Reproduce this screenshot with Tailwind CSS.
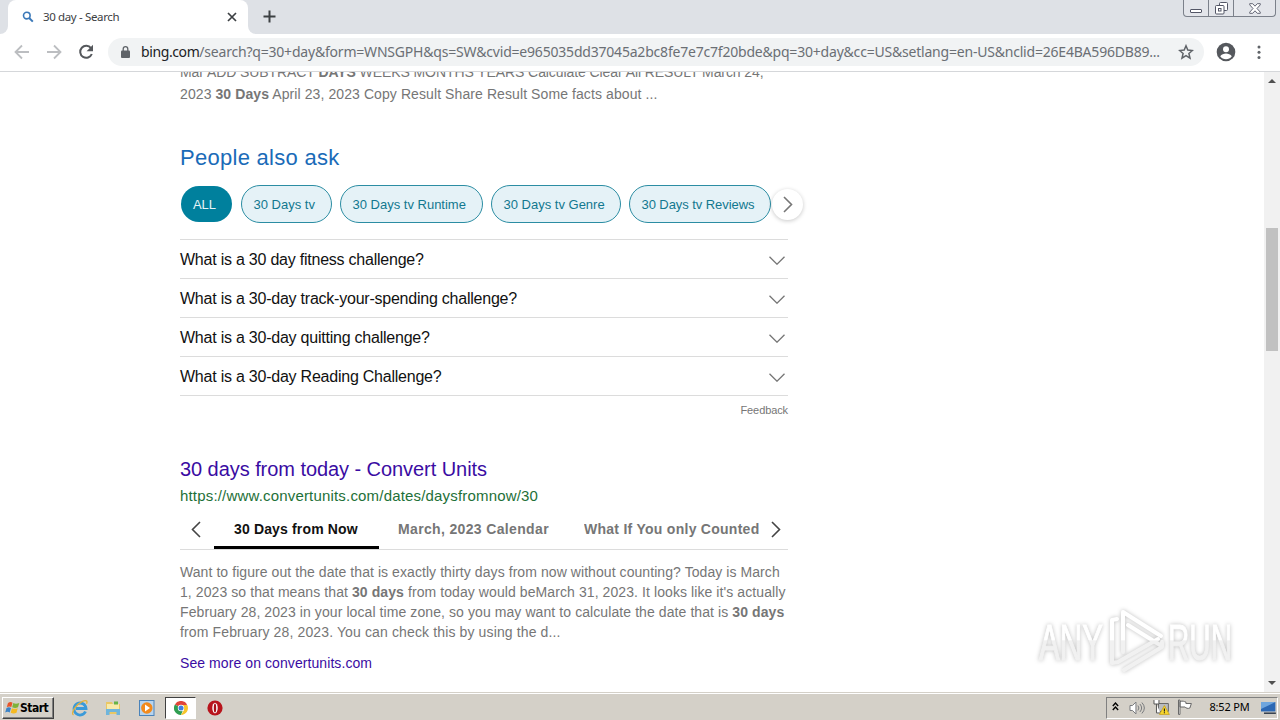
<!doctype html>
<html lang="en">
    <head>
        <meta charset="UTF-8" />
        <meta name="viewport" content="width=device-width, initial-scale=1.0" />
        <title>30 day - Search</title>
        <script src="https://cdn.jsdelivr.net/npm/@tailwindcss/browser@4"></script>
    </head>
    <body
        class="relative flex h-[720px] w-[1280px] flex-col overflow-hidden bg-white font-['Liberation_Sans',sans-serif] whitespace-nowrap"
    >
        <!-- Tab strip -->
        <header class="flex h-[34px] shrink-0 items-start bg-[#dee1e6]">
            <div class="flex h-[34px] w-2 items-end bg-white">
                <div class="h-[34px] w-2 rounded-br-lg bg-[#dee1e6]"></div>
            </div>
            <div
                class="flex h-[34px] w-60 items-center rounded-t-lg bg-white pr-2.5 pl-3.5 font-['Noto_Sans',sans-serif] text-[11.5px] text-[#3c4043]"
            >
                <svg class="mr-[9px] size-3" viewBox="0 0 12 12" fill="none" stroke="#3a78b8">
                    <circle cx="4.8" cy="4.6" r="3.3" stroke-width="1.6" />
                    <path d="M7.2 7 10.8 10.6" stroke-width="2" />
                </svg>
                <span class="tracking-[-0.36px]">30 day - Search</span>
                <svg class="ml-auto size-3" viewBox="0 0 12 12" stroke="#3c4043" stroke-width="1.7">
                    <path d="M2 2 10 10M10 2 2 10" />
                </svg>
            </div>
            <div class="h-[34px] w-2 bg-white">
                <div class="h-[34px] w-2 rounded-bl-lg bg-[#dee1e6]"></div>
            </div>
            <svg class="mt-2.5 ml-[7px] size-[13px]" viewBox="0 0 13 13" stroke="#3c4043" stroke-width="2">
                <path d="M6.5 .5v12M.5 6.5h12" />
            </svg>
            <!-- Window buttons -->
            <div class="mr-1 ml-auto flex h-[17px] w-[93px] rounded-b border border-t-0 border-[#7b808a] bg-[#e3e5ea]">
                <div class="flex w-[25px] items-end justify-center border-r border-[#7b808a] pb-[3px]">
                    <div class="h-1 w-3 rounded-[1px] border border-[#535666] bg-white"></div>
                </div>
                <div class="flex w-[25px] justify-center border-r border-[#7b808a] pt-0.5">
                    <svg class="size-[13px]" viewBox="0 0 13 13" fill="#fff" stroke="#535666">
                        <rect x="4.5" y=".5" width="8" height="8" rx="1" />
                        <rect x=".5" y="3.5" width="8.5" height="8.5" rx="1" />
                        <rect x="3.5" y="6.5" width="2.5" height="2.5" />
                    </svg>
                </div>
                <div class="flex flex-1 justify-center pt-[3px]">
                    <svg class="h-[11px] w-3" viewBox="0 0 12 11" fill="#fff" stroke="#535666" stroke-width=".9">
                        <path d="M.7.7h3L6 3.2 8.3.7h3v1.1L8 5.5l3.3 3.7v1.1h-3L6 7.8l-2.3 2.5h-3V9.2L4 5.5.7 1.8z" />
                    </svg>
                </div>
            </div>
        </header>

        <!-- Toolbar -->
        <div class="flex h-[38px] shrink-0 items-center border-b border-[#d5d7da] bg-white pb-px">
            <svg class="ml-3.5 size-4" viewBox="0 0 16 16" fill="none" stroke="#bcbec1" stroke-width="1.8">
                <path d="M15 8H2M8 1.5 1.5 8 8 14.5" />
            </svg>
            <svg class="ml-4 size-4" viewBox="0 0 16 16" fill="none" stroke="#bcbec1" stroke-width="1.8">
                <path d="M1 8h13M8 1.5 14.5 8 8 14.5" />
            </svg>
            <svg class="ml-4 size-4" viewBox="0 0 16 16" fill="none">
                <path d="M13 4.2A6 6 0 1 0 13.8 10" stroke="#55585c" stroke-width="2" />
                <path d="M15 .8v6.4H8.6z" fill="#55585c" />
            </svg>
            <div
                class="ml-[14px] flex h-7 w-[1096px] items-center rounded-full bg-[#f1f3f4] pr-2.5 pl-[13px] font-['Noto_Sans',sans-serif] text-[14px] text-[#6b6f74]"
            >
                <svg class="mr-[11px] h-3 w-[9px]" viewBox="0 0 9 12">
                    <path d="M2.2 5V3a2.3 2.3 0 0 1 4.6 0v2" fill="none" stroke="#5f6368" stroke-width="1.3" />
                    <rect y="4.5" width="9" height="7.5" rx="1" fill="#5f6368" />
                </svg>
                <span class="-mt-px w-[1020px] tracking-[-0.205px]"
                    ><span class="tracking-[-0.4px] text-[#202124]">bing.com</span>/search?q=30+day&amp;form=WNSGPH&amp;qs=SW&amp;cvid=e965035dd37045a2bc8fe7e7c7f20bde&amp;pq=30+day&amp;cc=US&amp;setlang=en-US&amp;nclid=26E4BA596DB89...</span
                >
                <svg class="ml-auto size-4" viewBox="0 0 16 16" fill="none" stroke="#5f6368" stroke-width="1.5">
                    <path d="m8 1.8 1.8 4.3 4.6.4-3.5 3 1.1 4.6L8 11.7l-4 2.4 1.1-4.6-3.5-3 4.6-.4z" />
                </svg>
            </div>
            <svg class="ml-3 size-5" viewBox="0 0 20 20">
                <circle cx="10" cy="10" r="9.3" fill="#55585d" />
                <circle cx="10" cy="7.3" r="3" fill="#fff" />
                <path d="M4.2 14.2c1.2-2 3.6-2.8 5.8-2.8s4.6.8 5.8 2.8a7 7 0 0 1-11.6 0z" fill="#fff" />
            </svg>
            <svg class="ml-[21px] h-4 w-1" viewBox="0 0 4 16" fill="#5f6368">
                <circle cx="2" cy="3" r="1.5" />
                <circle cx="2" cy="8.3" r="1.5" />
                <circle cx="2" cy="13.6" r="1.5" />
            </svg>
        </div>

        <!-- Page -->
        <div class="flex h-[620px] shrink-0 overflow-hidden">
            <main class="w-[1264px] pl-[180px] text-[#767676]">
                <div class="-mt-[11px] text-[14px] leading-[22px]">
                    <p class="tracking-[-0.08px]">
                        Mar ADD SUBTRACT <b>DAYS</b> WEEKS MONTHS YEARS Calculate Clear All RESULT March 24,
                    </p>
                    <p class="tracking-[0.09px]">
                        2023 <b>30 Days</b> April 23, 2023 Copy Result Share Result Some facts about ...
                    </p>
                </div>

                <h2 class="mt-[39px] text-[22px] leading-7 tracking-[0.28px] text-[#1a6bb8]">People also ask</h2>
                <div class="mt-[13px] flex h-[38px] items-center gap-2 text-[13px] text-[#12788f]">
                    <div class="ml-px flex h-9 w-[51px] items-center justify-center rounded-full bg-[#00809d] pt-0.5 pr-1 text-[#e5f4f7]">ALL</div>
                    <div class="ml-px flex h-[38px] w-[91px] items-center rounded-full border border-[#2b8da3] bg-[#e5f2f7] pt-0.5 pl-[11.5px]">30 Days tv</div>
                    <div class="flex h-[38px] w-[143px] items-center rounded-full border border-[#2b8da3] bg-[#e5f2f7] pt-0.5 pl-[11.5px]">30 Days tv Runtime</div>
                    <div class="flex h-[38px] w-[130px] items-center rounded-full border border-[#2b8da3] bg-[#e5f2f7] pt-0.5 pl-[11.5px]">30 Days tv Genre</div>
                    <div class="flex h-[38px] w-[142px] items-center rounded-full border border-[#2b8da3] bg-[#e5f2f7] pt-0.5 pl-[11.5px] tracking-[-0.07px]">30 Days tv Reviews</div>
                    <div class="-ml-[7px] flex size-[31px] items-center justify-center rounded-full bg-white pl-px shadow-[0_1px_4px_rgba(0,0,0,0.22)]">
                        <svg class="h-[17px] w-[10px]" viewBox="0 0 10 17" fill="none" stroke="#767676" stroke-width="1.6">
                            <path d="m1 1 7.5 7.5L1 16" />
                        </svg>
                    </div>
                </div>

                <div class="mt-4 w-[608px] border-t border-[#dcdcdc] text-[16px] tracking-[-0.23px] text-[#111]">
                    <div class="flex h-[39px] items-center justify-between border-b border-[#dcdcdc] pt-0.5 pr-[3px]">
                        <span>What is a 30 day fitness challenge?</span>
                        <svg class="h-[9px] w-4" viewBox="0 0 16 9" fill="none" stroke="#767676" stroke-width="1.3"><path d="m.5.7 7.5 7.5L15.5.7" /></svg>
                    </div>
                    <div class="flex h-[39px] items-center justify-between border-b border-[#dcdcdc] pt-0.5 pr-[3px]">
                        <span>What is a 30-day track-your-spending challenge?</span>
                        <svg class="h-[9px] w-4" viewBox="0 0 16 9" fill="none" stroke="#767676" stroke-width="1.3"><path d="m.5.7 7.5 7.5L15.5.7" /></svg>
                    </div>
                    <div class="flex h-[39px] items-center justify-between border-b border-[#dcdcdc] pt-0.5 pr-[3px]">
                        <span>What is a 30-day quitting challenge?</span>
                        <svg class="h-[9px] w-4" viewBox="0 0 16 9" fill="none" stroke="#767676" stroke-width="1.3"><path d="m.5.7 7.5 7.5L15.5.7" /></svg>
                    </div>
                    <div class="flex h-[39px] items-center justify-between border-b border-[#dcdcdc] pt-0.5 pr-[3px]">
                        <span>What is a 30-day Reading Challenge?</span>
                        <svg class="h-[9px] w-4" viewBox="0 0 16 9" fill="none" stroke="#767676" stroke-width="1.3"><path d="m.5.7 7.5 7.5L15.5.7" /></svg>
                    </div>
                </div>
                <div class="mt-1.5 w-[608px] text-right text-[11px] leading-4 tracking-[-0.1px]">Feedback</div>

                <h2 class="mt-[38px] text-[20px] leading-[26px] tracking-[-0.06px] text-[#3a0ca3]">30 days from today - Convert Units</h2>
                <div class="mt-1 text-[15px] leading-5 tracking-[0.18px] text-[#1e7038]">https://www.convertunits.com/dates/daysfromnow/30</div>

                <div class="mt-[3px] flex h-[41px] w-[608px] items-center border-b border-[#dcdcdc] text-[14px] font-bold">
                    <svg class="ml-[11px] h-[17px] w-[10px]" viewBox="0 0 10 17" fill="none" stroke="#444" stroke-width="1.6">
                        <path d="M9 1 1.5 8.5 9 16" />
                    </svg>
                    <div class="ml-[13px] flex h-10 w-[165px] items-center border-b-[3px] border-black pt-[3px] pl-5 tracking-[0.15px] text-[#111]">30 Days from Now</div>
                    <div class="ml-[19px] w-[186px] tracking-[0.35px]">March, 2023 Calendar</div>
                    <div class="w-[176px] overflow-hidden tracking-[0.27px]">What If You only Counted</div>
                    <svg class="ml-[11px] h-[17px] w-[10px]" viewBox="0 0 10 17" fill="none" stroke="#444" stroke-width="1.6">
                        <path d="m1 1 7.5 7.5L1 16" />
                    </svg>
                </div>

                <div class="mt-3 text-[14px] leading-5 tracking-[0.085px]">
                    <p class="tracking-[0.07px]">Want to figure out the date that is exactly thirty days from now without counting? Today is March</p>
                    <p>1, 2023 so that means that <b>30 days</b> from today would beMarch 31, 2023. It looks like it's actually</p>
                    <p>February 28, 2023 in your local time zone, so you may want to calculate the date that is <b>30 days</b></p>
                    <p class="tracking-[0.13px]">from February 28, 2023. You can check this by using the d...</p>
                </div>
                <div class="mt-[11px] text-[14px] leading-5 tracking-[0.08px] text-[#3a0ca3]">See more on convertunits.com</div>
            </main>

            <!-- Scrollbar -->
            <div class="flex h-full w-4 flex-col items-center bg-[#f1f1f1]">
                <svg class="mt-[7px] h-1 w-2" viewBox="0 0 8 4" fill="#505050"><path d="M0 4 4 0l4 4z" /></svg>
                <div class="mt-[145px] h-[123px] w-3 bg-[#c1c1c1]"></div>
                <svg class="mt-auto mb-[7px] h-1 w-2" viewBox="0 0 8 4" fill="#505050"><path d="M0 0h8L4 4z" /></svg>
            </div>
        </div>

        <!-- Taskbar -->
        <footer class="flex h-7 shrink-0 items-center border-t border-[#d4d0c8] bg-[#d4d0c8] pt-0.5 shadow-[inset_0_1px_0_#fff]">
            <div
                class="ml-0.5 flex h-[22px] w-[52px] items-center border border-t-white border-r-[#404040] border-b-[#404040] border-l-white pl-px font-['DejaVu_Sans_Condensed','DejaVu_Sans',sans-serif] text-[12px] font-bold text-black shadow-[inset_-1px_-1px_0_#808080]"
            >
                <svg class="h-4 w-[17px] shrink-0" viewBox="0 0 17 16">
                    <path d="M4 3c2-1.5 3.5-1 4.5-.3L7.3 7C6 6.2 4.5 6.2 2.8 7z" fill="#e8552a" />
                    <path d="M9.3 3c1.5.9 3.5 1 6 0L14 7.3c-2 1-4 .8-5.8 0z" fill="#7fb239" />
                    <path d="M2.5 8c1.7-.9 3.2-.8 4.5 0l-1.3 4.5c-1.3-.9-2.8-.9-4.5 0z" fill="#3b83c8" />
                    <path d="M7.9 8.2c1.8.8 3.7.9 5.8 0L12.5 12.7c-2 1-4 .8-5.8 0z" fill="#f5b921" />
                </svg>
                <span class="-ml-px tracking-[-0.5px]">Start</span>
            </div>
            <!-- Internet Explorer -->
            <svg class="ml-[17px] size-[18px]" viewBox="0 0 18 18" fill="none">
                <path d="M14.5 12.5A6 6 0 1 1 15 9.5H5" stroke="#3a9ad9" stroke-width="2.8" />
                <path d="M2.5 16C-.5 14 5 5.5 11 2.7c4-2 6-1 4.5 2" stroke="#e3b23c" stroke-width="1.3" />
            </svg>
            <!-- Explorer -->
            <svg class="ml-[15px] size-[18px]" viewBox="0 0 18 18">
                <path d="M2 3h6l1 2h7v10H2z" fill="#e9c765" />
                <path d="M3 5h12v5H3z" fill="#f8eaaa" />
                <path d="M10 2.5h4v3h-4z" fill="#67b346" />
                <path d="M2 10h14v6h-3.5v-3h-7v3H2z" fill="#6fb5dc" />
            </svg>
            <!-- Media player -->
            <svg class="ml-4 size-[18px]" viewBox="0 0 18 18">
                <rect x="1.5" y="1.5" width="14.5" height="15" fill="#b7d4ee" stroke="#4a83ba" />
                <circle cx="8.8" cy="9" r="5.7" fill="#f28a1c" />
                <path d="m7 5.5 5 3.5-5 3.5z" fill="#fff" />
            </svg>
            <!-- Chrome -->
            <div
                class="ml-[9px] flex h-[22px] w-[31px] items-center justify-center border border-t-[#404040] border-r-white border-b-white border-l-[#404040] bg-white"
            >
                <svg class="size-[14px]" viewBox="0 0 14 14">
                    <path d="M7 7 .9 3.5a7 7 0 0 1 12.2 0z" fill="#e0453a" />
                    <path d="M7 7 .9 3.5A7 7 0 0 0 7 14l2-5z" fill="#2f9e51" />
                    <path d="M7 4h6.3A7 7 0 0 1 7 14l3-5z" fill="#f7c52b" />
                    <circle cx="7" cy="7" r="3.2" fill="#fff" />
                    <circle cx="7" cy="7" r="2.5" fill="#3f7fe0" />
                </svg>
            </div>
            <!-- Opera -->
            <svg class="ml-[11px] size-4" viewBox="0 0 16 16">
                <circle cx="8" cy="8" r="7.6" fill="#b8141c" />
                <ellipse cx="8" cy="8" rx="2.7" ry="5.3" fill="#fff" />
                <ellipse cx="8" cy="8" rx="1.2" ry="4.5" fill="#a80f18" />
            </svg>

            <!-- Tray -->
            <div
                class="mr-0.5 ml-auto flex h-[22px] w-[172px] items-center border border-t-[#808080] border-r-white border-b-white border-l-[#808080] font-['Noto_Sans',sans-serif] text-[11px] text-black"
            >
                <svg class="-mt-[3px] ml-[5px] h-[9px] w-[7px]" viewBox="0 0 7 9" fill="none" stroke="#000" stroke-width="1.4">
                    <path d="m.8 4 2.7-3 2.7 3M.8 8l2.7-3 2.7 3" />
                </svg>
                <svg class="ml-[10px] h-4 w-[17px]" viewBox="0 0 17 16" fill="none" stroke="#77797c">
                    <path d="M1 5.5h2.5L7 2v12l-3.5-3.5H1z" fill="#fff" />
                    <path d="M9 5.5q2 2.500 0 5M11 4q3.500 4 0 8M13 2.500q5 5.500 0 11" />
                </svg>
                <svg class="-mt-px ml-[7px] h-4 w-[17px]" viewBox="0 0 17 16">
                    <path d="M5.5 4.5h10v8h-10z" fill="#b9bcc0" stroke="#666" />
                    <path d="M1 1v4h5V1M3.5 5v9h4" fill="#fff" stroke="#555" />
                    <path d="m11.5 6.5 5 9h-10z" fill="#f8d62c" stroke="#c19a13" stroke-width=".7" />
                    <path d="M11.5 9.5v3M11.5 13.3v1" stroke="#222" stroke-width="1.2" />
                </svg>
                <svg class="-mt-px ml-[7px] h-4 w-4" viewBox="0 0 16 16" fill="#fff" stroke="#666">
                    <path d="M1.5 1v14.5h1.5V1zM3 2.5c3-1 4 0 6 .5v1.5h5.5L13 9c-2 1-4 0-5-1H3z" />
                </svg>
                <span class="ml-[17px] w-[42px] tracking-[-0.2px]">8:52 PM</span>
                <svg class="ml-[9px] h-[14px] w-[17px]" viewBox="0 0 17 14">
                    <path d="M1 1h14.5v9.5H1z" fill="#2c68b4" />
                    <path d="M1 1h14.5L1 8z" fill="#6fa6de" />
                    <path d="M4 11.5h12v1.5H4z" fill="#303b4b" />
                </svg>
            </div>
        </footer>

        <!-- Watermark over the page -->
        <svg class="absolute top-[605px] left-[1034px] h-[72px] w-[204px] drop-shadow-[0_0_2px_rgba(0,0,0,0.26)]" viewBox="0 0 204 72">
            <defs>
                <linearGradient id="fade" gradientUnits="userSpaceOnUse" x1="0" y1="0" x2="0" y2="72">
                    <stop offset=".48" stop-color="#fff" />
                    <stop offset=".5" stop-color="#f1f1f1" />
                </linearGradient>
            </defs>
            <g fill="url(#fade)" stroke="url(#fade)" stroke-width="1" font-family="Liberation Sans" font-size="50">
                <text x="5" y="55" textLength="64" lengthAdjust="spacingAndGlyphs">ANY</text>
                <text x="134" y="55" textLength="64" lengthAdjust="spacingAndGlyphs">RUN</text>
            </g>
            <g fill="none" stroke="url(#fade)" stroke-width="4" stroke-linejoin="round" stroke-linecap="round">
                <path d="M83 14l-5 1v43l6-1 40-23" />
                <path d="M89 47V7l38 24M94 20l32 20" />
                <path d="M90 65l38-23v-5" />
            </g>
        </svg>
    </body>
</html>
